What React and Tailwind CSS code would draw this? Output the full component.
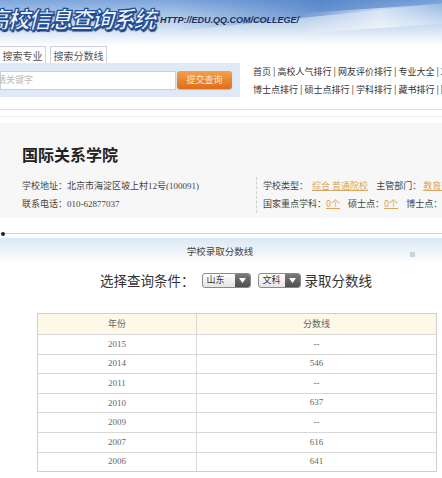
import React from 'react';

const cjk = "font-['Noto_Sans_CJK_SC','Noto_Sans',sans-serif]";
const serif = "font-['Liberation_Serif','Noto_Sans_CJK_SC',serif]";

const rows = [
  ['2015', '--'],
  ['2014', '546'],
  ['2011', '--'],
  ['2010', '637'],
  ['2009', '--'],
  ['2007', '616'],
  ['2006', '641'],
];

function Select({ label, w }) {
  return (
    <div className="flex h-[15px] items-stretch rounded-[3px] border border-[#8a8a8a] bg-gradient-to-b from-white to-[#e4e4e4] overflow-hidden">
      <span className={`flex items-center whitespace-nowrap px-[4px] text-[9px] text-[#333] ${w}`}>{label}</span>
      <span className="flex w-[15px] items-center justify-center bg-gradient-to-b from-[#7a7a7a] to-[#4e4e4e]">
        <svg width="7" height="5" viewBox="0 0 7 5"><path d="M0 0h7L3.5 5z" fill="#fff" /></svg>
      </span>
    </div>
  );
}

export default function App() {
  return (
    <div className={`w-[442px] h-[478px] overflow-hidden bg-white ${cjk}`}>
      {/* Banner */}
      <div className="relative h-[46px] bg-gradient-to-b from-[#7ea6dc] via-[#c4d7ee] to-white overflow-hidden">
        <div className="absolute -top-[20px] left-[170px] h-[36px] w-[300px] rotate-[-6deg] bg-gradient-to-r from-transparent via-[#2f66b8]/50 to-transparent" />
        <div className="absolute top-[8px] left-[300px] h-[20px] w-[160px] rotate-[-4deg] bg-gradient-to-r from-transparent via-white/60 to-transparent" />
        <div className="relative flex items-end pt-[4px]">
          <span className="-ml-[14px] text-[23px] leading-[28px] font-black italic tracking-[-2px] text-[#eef4fc] [-webkit-text-stroke:1.2px_#1f4f98] [text-shadow:1px_2px_1px_#1a3f7a]">
            高校信息查询系统
          </span>
          <span className="ml-[6px] mb-[5px] text-[9px] font-bold italic text-[#1b2f5c] font-['Liberation_Sans',sans-serif]">
            HTTP://EDU.QQ.COM/COLLEGE/
          </span>
        </div>
      </div>

      {/* Tabs + search + links */}
      <div className="flex h-[51px] overflow-hidden">
        <div className="w-[240px] shrink-0">
          <div className="flex h-[17px] items-end gap-[4px]">
            <div className="-ml-[1px] flex h-[17px] w-[47px] items-center justify-center border border-b-0 border-[#c9d2dc] bg-white text-[10px] text-[#555]">搜索专业</div>
            <div className="flex h-[17px] w-[57px] items-center justify-center border border-b-0 border-[#c9d2dc] bg-white text-[10px] text-[#555]">搜索分数线</div>
          </div>
          <div className="flex h-[34px] items-center bg-[#dfeaf6] pr-[8px]">
            <div className="flex h-[19px] w-[176px] items-center border border-[#c4d2e0] bg-white text-[9px] text-[#bbb]">
              <span className="-ml-[4px]">请关键字</span>
            </div>
            <div className="ml-[1px] flex h-[18px] w-[55px] items-center justify-center rounded-[3px] bg-gradient-to-b from-[#f5a04a] to-[#e06c18] text-[9px] text-[#fde8d0] shadow-[0_1px_1px_rgba(0,0,0,0.2)]">提交查询</div>
          </div>
        </div>
        <div className="ml-[13px] pt-[17px] text-[9px] leading-[18px] text-[#333] whitespace-nowrap">
          <div>首页 | 高校人气排行 | 网友评价排行 | 专业大全 | 21</div>
          <div>博士点排行 | 硕士点排行 | 学科排行 | 藏书排行 | 院</div>
        </div>
      </div>

      <div className="mt-[12px] h-px bg-[#d6e0ea]" />
      <div className="mt-[6px] h-px bg-[#ececec]" />

      {/* School card */}
      <div className="mt-[6px] h-[95px] bg-[#f7f7f7] pl-[22px] pt-[20px]">
        <div className="text-[16px] leading-[22px] font-bold text-[#222]">国际关系学院</div>
        <div className="mt-[12px] flex text-[9px] leading-[18px] text-[#444] whitespace-nowrap">
          <div className="w-[234px] shrink-0">
            <div>学校地址：<span className={serif}>北京市海淀区坡上村12号(100091)</span></div>
            <div>联系电话：<span className={serif}>010-62877037</span></div>
          </div>
          <div className="border-l border-dashed border-[#d0d0d0] pl-[6px]">
            <div>学校类型：&nbsp;&nbsp;<span className="text-[#d6a75c] underline">综合 普通院校</span>&nbsp;&nbsp;&nbsp;&nbsp;主管部门：&nbsp;<span className="text-[#d6a75c] underline">教育部</span></div>
            <div>国家重点学科：<span className="text-[#d6a75c] underline">0个</span>&nbsp;&nbsp;&nbsp;&nbsp;硕士点：<span className="text-[#d6a75c] underline">0个</span>&nbsp;&nbsp;&nbsp;&nbsp;博士点：<span className="text-[#d6a75c] underline">0个</span></div>
          </div>
        </div>
      </div>

      {/* Divider with dot */}
      <div className="relative mt-[15px] h-px bg-[#cfcfcf]">
        <div className="absolute left-[1px] -top-[1.5px] h-[4px] w-[4px] rounded-full bg-[#222]" />
      </div>

      {/* Score section */}
      <div className="mt-[4px] flex h-[26px] items-center bg-gradient-to-b from-[#dbe8f5] to-white">
        <div className="flex-1 pl-[30px] text-center text-[9.5px] text-[#444]">学校录取分数线</div>
        <div className="mr-[27px] mt-[6px] h-[5px] w-[5px] bg-[#c9d3de]" />
      </div>

      <div className="mt-[6px] flex h-[20px] items-center pl-[100px]">
        <span className="text-[13.5px] leading-[20px] text-[#333]">选择查询条件：</span>
        <div className="ml-[7px]"><Select label="山东" w="w-[32px]" /></div>
        <div className="ml-[7px]"><Select label="文科" w="w-[26px]" /></div>
        <span className="ml-[4px] text-[13.5px] leading-[20px] text-[#333]">录取分数线</span>
      </div>

      <div className="ml-[37px] mt-[23px] w-[400px] border border-[#cfcfcf] text-[9px] text-[#666]">
        <div className="flex h-[20px] items-center bg-[#fdf8e7]">
          <div className="w-[159px] border-r border-[#d8d8d8] text-center leading-[20px]">年份</div>
          <div className="flex-1 text-center">分数线</div>
        </div>
        {rows.map(([y, s]) => (
          <div key={y} className={`flex h-[19.6px] items-center border-t border-[#d8d8d8] ${serif}`}>
            <div className="w-[159px] border-r border-[#d8d8d8] text-center leading-[19px]">{y}</div>
            <div className="flex-1 text-center">{s}</div>
          </div>
        ))}
      </div>
    </div>
  );
}
